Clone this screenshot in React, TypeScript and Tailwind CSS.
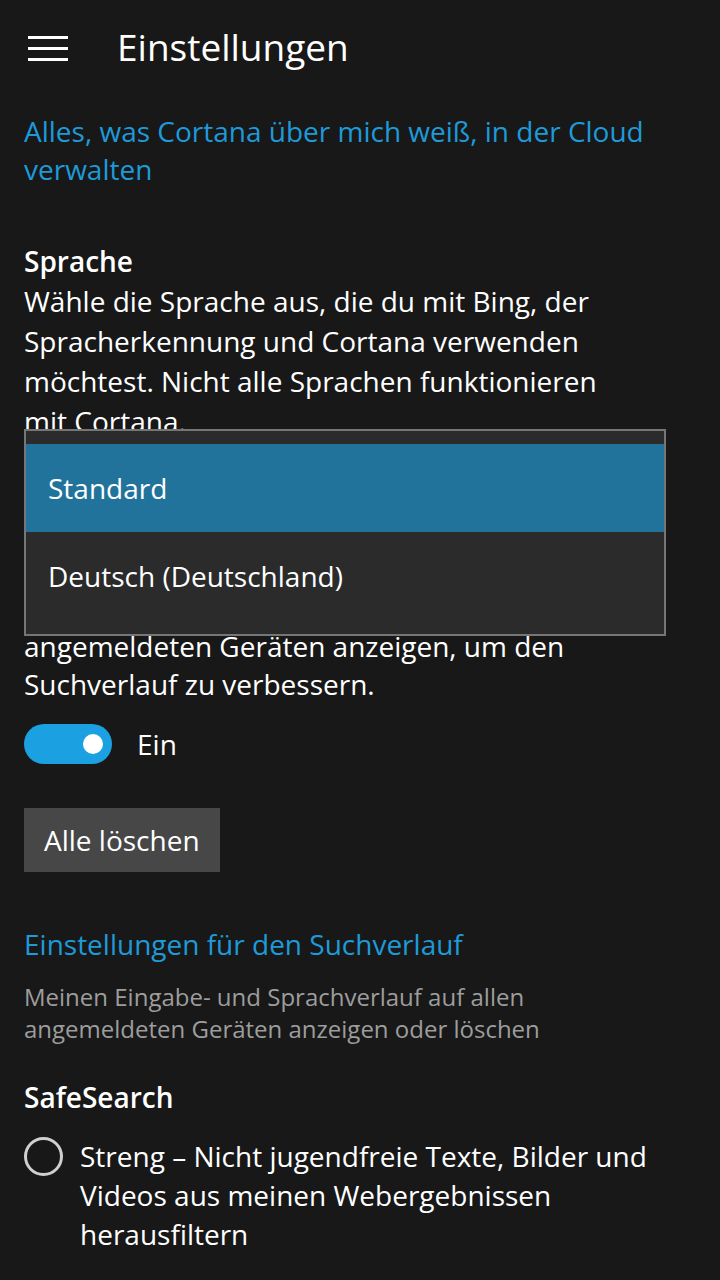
import { useState } from "react";

const languages = ["Standard", "Deutsch (Deutschland)"];

export default function App() {
  const [selected, setSelected] = useState(0);
  const [history, setHistory] = useState(true);
  const [strict, setStrict] = useState(false);

  return (
    <div className="relative min-h-[1280px] w-[720px] overflow-hidden bg-[#181818] font-['Open_Sans',sans-serif] text-[28px] text-white">
      {/* header */}
      <header className="flex h-[96px] items-center">
        <button className="ml-[28px] flex w-[40px] flex-col gap-[8px] py-[2px]">
          <span className="h-[3px] w-full bg-white" />
          <span className="h-[3px] w-full bg-white" />
          <span className="h-[3px] w-full bg-white" />
        </button>
        <h1 className="ml-[49px] -mt-[4px] text-[37px] font-normal leading-none">Einstellungen</h1>
      </header>

      <main className="px-[24px] pt-[16px]">
        <a className="block leading-[38px] text-[#1e9ad9] whitespace-nowrap">
          Alles, was Cortana über mich weiß, in der Cloud
          <br />
          verwalten
        </a>

        <h2 className="mt-[53px] font-semibold leading-[40px]">Sprache</h2>
        <p className="leading-[40px] whitespace-nowrap">
          Wähle die Sprache aus, die du mit Bing, der
          <br />
          Spracherkennung und Cortana verwenden
          <br />
          möchtest. Nicht alle Sprachen funktionieren
          <br />
          mit Cortana.
        </p>
        {/* combobox and heading lie under the open list */}
        <div className="invisible mt-[12px] flex h-[60px] w-[300px] items-center border-2 border-[#7a7a7a] px-[12px]">
          {languages[selected]}
        </div>

        <h2 className="invisible mt-[36px] font-semibold leading-[40px]">Suchverlauf</h2>
        <p className="leading-[38px] whitespace-nowrap">
          <span className="invisible block">Meinen Eingabe- und Sprachverlauf auf allen</span>
          angemeldeten Geräten anzeigen, um den
          <br />
          Suchverlauf zu verbessern.
        </p>

        <div className="mt-[21px] flex items-center">
          <button
            onClick={() => setHistory(!history)}
            className={`flex h-[40px] w-[88px] items-center rounded-full px-[9px] ${
              history ? "justify-end bg-[#1ba1e2]" : "justify-start border-2 border-white"
            }`}
          >
            <span className="h-[20px] w-[20px] rounded-full bg-white" />
          </button>
          <span className="ml-[25px] leading-[40px]">{history ? "Ein" : "Aus"}</span>
        </div>

        <button className="mt-[44px] h-[64px] bg-[#474747] px-[20px] leading-[64px]">Alle löschen</button>

        <a className="mt-[53px] block leading-[38px] text-[#1e9ad9]">Einstellungen für den Suchverlauf</a>
        <p className="mt-[18px] whitespace-nowrap text-[24px] leading-[32px] text-[#9d9d9d]">
          Meinen Eingabe- und Sprachverlauf auf allen
          <br />
          angemeldeten Geräten anzeigen oder löschen
        </p>

        <h2 className="mt-[32px] font-semibold leading-[40px]">SafeSearch</h2>
        <label className="mt-[20px] flex items-start" onClick={() => setStrict(!strict)}>
          <span className="flex h-[39px] w-[39px] shrink-0 items-center justify-center rounded-full border-[3px] border-[#cfcfcf]">
            {strict && <span className="h-[17px] w-[17px] rounded-full bg-white" />}
          </span>
          <span className="ml-[17px] whitespace-nowrap leading-[39px]">
            Streng – Nicht jugendfreie Texte, Bilder und
            <br />
            Videos aus meinen Webergebnissen
            <br />
            herausfiltern
          </span>
        </label>
      </main>

      {/* open language dropdown */}
      <div className="absolute left-[24px] top-[429px] h-[207px] w-[642px] border-2 border-[#767676] bg-[#2b2b2b] pt-[13px]">
        {languages.map((lang, i) => (
          <div
            key={lang}
            onClick={() => setSelected(i)}
            className={`flex h-[88px] items-center px-[22px] ${i === selected ? "bg-[#22739b]" : ""}`}
          >
            {lang}
          </div>
        ))}
      </div>
    </div>
  );
}
